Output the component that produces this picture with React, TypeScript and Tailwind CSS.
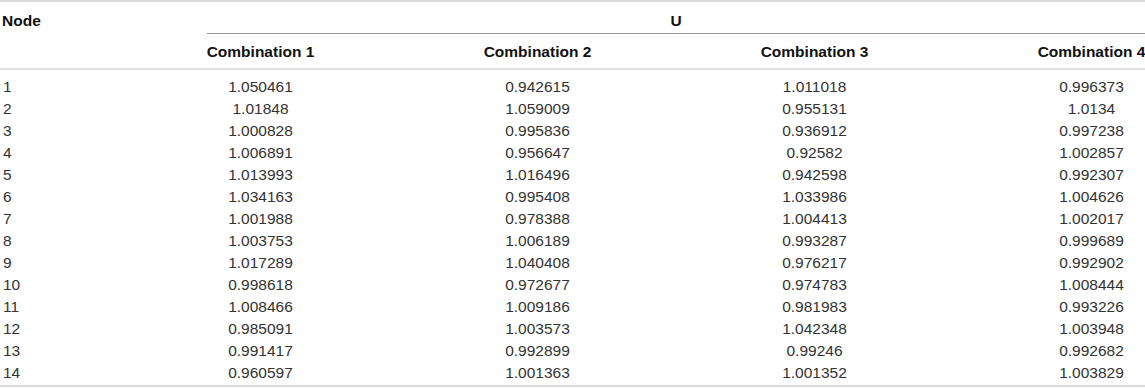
// Node / U table: four combinations of node voltages, clipped on the right like the source.

const ROWS: [number, string, string, string, string][] = [
  [1, "1.050461", "0.942615", "1.011018", "0.996373"],
  [2, "1.01848", "1.059009", "0.955131", "1.0134"],
  [3, "1.000828", "0.995836", "0.936912", "0.997238"],
  [4, "1.006891", "0.956647", "0.92582", "1.002857"],
  [5, "1.013993", "1.016496", "0.942598", "0.992307"],
  [6, "1.034163", "0.995408", "1.033986", "1.004626"],
  [7, "1.001988", "0.978388", "1.004413", "1.002017"],
  [8, "1.003753", "1.006189", "0.993287", "0.999689"],
  [9, "1.017289", "1.040408", "0.976217", "0.992902"],
  [10, "0.998618", "0.972677", "0.974783", "1.008444"],
  [11, "1.008466", "1.009186", "0.981983", "0.993226"],
  [12, "0.985091", "1.003573", "1.042348", "1.003948"],
  [13, "0.991417", "0.992899", "0.99246", "0.992682"],
  [14, "0.960597", "1.001363", "1.001352", "1.003829"],
];

const COMBOS = ["Combination 1", "Combination 2", "Combination 3", "Combination 4"];

export default function App() {
  return (
    <div
      className="h-[389px] w-[1145px] overflow-hidden bg-white text-[15.5px]"
      style={{ fontFamily: '"Liberation Sans", Arial, sans-serif' }}
    >
      <div className="w-[1230px] border-t-2 border-b-2 border-[#d9d9d9]">
        {/* header row 1 */}
        <div className="grid h-[32px] grid-cols-[122px_1108px]">
          <div className="pl-[2px] pt-[10px] font-bold leading-[18px] text-[#111]">Node</div>
          <div className="flex flex-col">
            <div className="pt-[10px] text-center font-bold leading-[18px] text-[#111]">U</div>
            <div className="mt-auto ml-[85px] h-px bg-[#9a9a9a]" />
          </div>
        </div>
        {/* header row 2 */}
        <div className="grid h-[36px] grid-cols-[122px_277px_277px_277px_277px] border-b-2 border-[#e0e0e0]">
          <div />
          {COMBOS.map((c) => (
            <div key={c} className="pt-[9px] text-center font-bold leading-[18px] text-[#111]">
              {c}
            </div>
          ))}
        </div>
        {/* body */}
        <div className="pt-[6px] pb-[1px] text-[#333]">
          {ROWS.map(([n, a, b, c, d]) => (
            <div key={n} className="grid h-[22px] grid-cols-[122px_277px_277px_277px_277px] items-center leading-[18px]">
              <div className="pl-[3px]">{n}</div>
              <div className="text-center">{a}</div>
              <div className="text-center">{b}</div>
              <div className="text-center">{c}</div>
              <div className="text-center">{d}</div>
            </div>
          ))}
        </div>
      </div>
    </div>
  );
}
